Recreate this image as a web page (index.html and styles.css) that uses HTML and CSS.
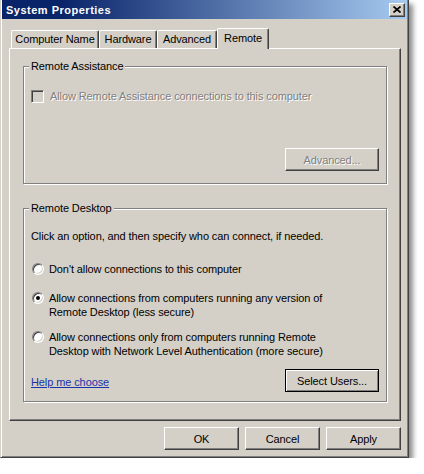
FILE: index.html
```html
<!DOCTYPE html>
<html lang="en">
<head>
    <meta charset="UTF-8">
    <meta name="viewport" content="width=device-width, initial-scale=1.0">
    <title>System Properties</title>
    <link rel="stylesheet" href="styles.css">
</head>
<body>

    <div class="window">
        <!-- Title bar -->
        <div class="titlebar">
            <span class="title">System Properties</span>
            <span class="close-btn">
                <svg width="8" height="7" viewBox="0 0 8 7">
                    <path d="M0.5 0.5 L7.5 6.5 M7.5 0.5 L0.5 6.5" stroke="#000" stroke-width="1.7" fill="none"/>
                </svg>
            </span>
        </div>

        <div class="content">
            <!-- Tabs -->
            <div class="tabs">
                <div class="tab tab-name">Computer Name</div>
                <div class="tab tab-hardware">Hardware</div>
                <div class="tab tab-advanced">Advanced</div>
                <div class="tab tab-remote active">Remote</div>
            </div>

            <div class="panel">
                <!-- Remote Assistance group -->
                <fieldset class="group group-assist">
                    <legend>Remote Assistance</legend>
                    <div class="check-row disabled">
                        <span class="checkbox"></span>
                        <span>Allow Remote Assistance connections to this computer</span>
                    </div>
                    <div class="assist-actions">
                        <button class="btn btn-wide" disabled>Advanced...</button>
                    </div>
                </fieldset>

                <!-- Remote Desktop group -->
                <fieldset class="group group-desktop">
                    <legend>Remote Desktop</legend>
                    <p class="intro">Click an option, and then specify who can connect, if needed.</p>
                    <div class="radio-row first">
                        <span class="radio"></span>
                        <span>Don't allow connections to this computer</span>
                    </div>
                    <div class="radio-row second">
                        <span class="radio checked"></span>
                        <span>Allow connections from computers running any version of<br>Remote Desktop (less secure)</span>
                    </div>
                    <div class="radio-row third">
                        <span class="radio"></span>
                        <span>Allow connections only from computers running Remote<br>Desktop with Network Level Authentication (more secure)</span>
                    </div>
                    <div class="help-row">
                        <a href="#" class="help-link">Help me choose</a>
                        <button class="btn btn-wide btn-default">Select Users...</button>
                    </div>
                </fieldset>
            </div>

            <!-- Dialog buttons -->
            <div class="dialog-buttons">
                <button class="btn">OK</button>
                <button class="btn">Cancel</button>
                <button class="btn">Apply</button>
            </div>
        </div>
    </div>

</body>
</html>
```

FILE: styles.css
```css
/* Page */
body {
    margin: 0;
    background-color: #fff;
    font-family: "Liberation Sans", Arial, sans-serif;
    font-size: 11px;
    letter-spacing: -0.1px;
    color: #000;
}

/* Classic window frame */
.window {
    box-sizing: border-box;
    width: 409px;
    height: 458px;
    background-color: #d4d0c8;
    border: 1px solid;
    border-top: 0;
    border-color: #d4d0c8 #404040 #404040 #d4d0c8;
    box-shadow: inset 1px 0 #fff, inset -1px -1px #808080, 4px 4px 5px rgba(0, 0, 0, 0.45);
    padding: 0 1px 1px 1px;
    display: flex;
    flex-direction: column;
}

.titlebar {
    height: 19px;
    display: flex;
    align-items: center;
    justify-content: space-between;
    padding: 0 2px 0 4px;
    background: linear-gradient(to right, #0a246a 15%, #a6caf0);
    color: #fff;
    font-weight: bold;
    letter-spacing: 0.5px;
}

.close-btn {
    box-sizing: border-box;
    width: 16px;
    height: 14px;
    background-color: #d4d0c8;
    border: 1px solid;
    border-color: #fff #404040 #404040 #fff;
    box-shadow: inset -1px -1px #808080;
    display: flex;
    align-items: center;
    justify-content: center;
}

.content {
    flex: 1;
    padding: 0 6px 0 7px;
}

/* Tabs */
.tabs {
    display: flex;
    align-items: flex-end;
    height: 20px;
    margin-top: 9px;
    padding-left: 2px;
    position: relative;
    z-index: 1;
}

.tab {
    box-sizing: border-box;
    height: 18px;
    border: 1px solid;
    border-bottom: 0;
    border-color: #fff #404040 #fff #fff;
    box-shadow: inset -1px 0 #808080;
    border-radius: 2px 2px 0 0;
    text-align: center;
    line-height: 17px;
    background-color: #d4d0c8;
}

.tab-name { width: 88px; }
.tab-hardware { width: 58px; }
.tab-advanced { width: 60px; }
.tab-remote { width: 52px; }

.tab.active {
    height: 21px;
    margin-bottom: -1px;
    line-height: 18px;
}

/* Tab page */
.panel {
    box-sizing: border-box;
    height: 373px;
    border: 1px solid;
    border-color: #fff #404040 #404040 #fff;
    box-shadow: inset -1px -1px #808080;
    padding: 0 13px;
}

/* Etched group boxes */
.group {
    box-sizing: border-box;
    margin: 11px 0 0;
    padding: 0 7px;
    min-width: 0;
    border: 1px solid #808080;
    box-shadow: 1px 1px 0 #fff, inset 1px 1px 0 #fff;
}

.group legend {
    padding: 0 2px;
    margin-left: -2px;
    line-height: 13px;
    background-color: #d4d0c8;
}

.group-assist { height: 124px; }

.group-desktop {
    margin-top: 18px;
    height: 200px;
}

.check-row {
    display: flex;
    align-items: center;
    gap: 6px;
    margin-top: 17px;
    line-height: 13px;
}

.check-row.disabled {
    color: #808080;
    text-shadow: 1px 1px #fff;
}

.checkbox {
    box-sizing: border-box;
    width: 13px;
    height: 13px;
    flex: none;
    border: 1px solid;
    border-color: #808080 #fff #fff #808080;
    box-shadow: inset 1px 1px #404040, inset -1px -1px #d4d0c8;
}

.assist-actions {
    display: flex;
    justify-content: flex-end;
    margin-top: 45px;
}

.intro {
    margin: 15px 0 0;
    line-height: 13px;
}

.radio-row {
    display: flex;
    align-items: flex-start;
    gap: 5px;
    line-height: 14px;
    padding-left: 1px;
}

.radio-row.first { margin-top: 19px; }
.radio-row.second { margin-top: 15px; }
.radio-row.third { margin-top: 11px; }

.radio {
    box-sizing: border-box;
    width: 12px;
    height: 12px;
    flex: none;
    margin-top: 1px;
    border-radius: 50%;
    background-color: #fff;
    border: 1px solid;
    border-color: #808080 #fff #fff #808080;
    box-shadow: inset 1px 1px #404040, inset -1px -1px #d4d0c8;
    display: flex;
    align-items: center;
    justify-content: center;
}

.radio.checked::after {
    content: "";
    width: 4px;
    height: 4px;
    border-radius: 50%;
    background-color: #000;
}

.help-row {
    display: flex;
    align-items: center;
    justify-content: space-between;
    margin-top: 11px;
}

.help-link {
    color: #1a33a8;
    margin-top: 3px;
}

/* Buttons */
.btn {
    box-sizing: border-box;
    width: 75px;
    height: 23px;
    padding: 0;
    font: inherit;
    letter-spacing: inherit;
    color: #000;
    background-color: #d4d0c8;
    border: 1px solid;
    border-color: #fff #404040 #404040 #fff;
    border-radius: 0;
    box-shadow: inset -1px -1px #808080;
}

.btn-wide { width: 94px; }

.btn:disabled {
    color: #808080;
    text-shadow: 1px 1px #fff;
}

.btn-default {
    border-color: #000;
    box-shadow: inset 1px 1px #fff, inset -1px -1px #808080;
}

.dialog-buttons {
    display: flex;
    justify-content: flex-end;
    gap: 6px;
    margin-top: 6px;
}
```
